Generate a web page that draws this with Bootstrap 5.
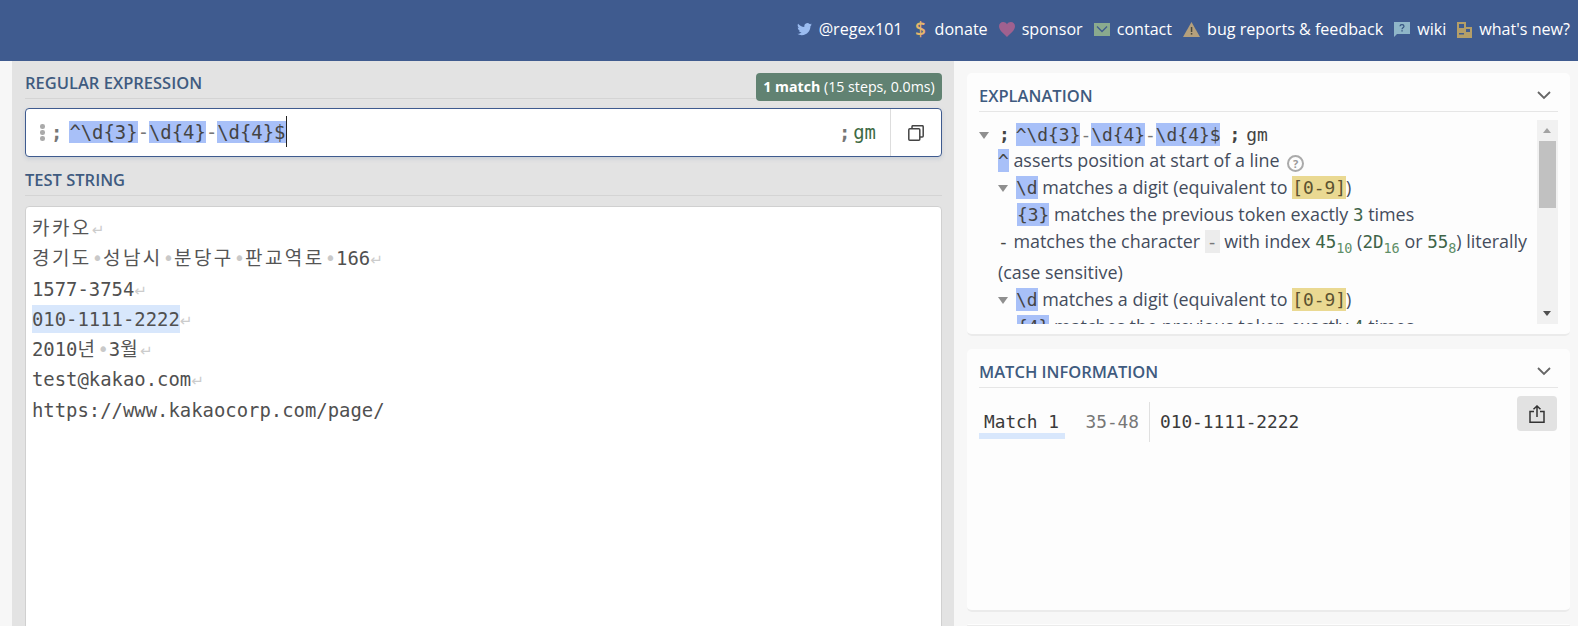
<!DOCTYPE html>
<html lang="en">
<head>
<meta charset="utf-8">
<title>regex101</title>
<link href="https://cdn.jsdelivr.net/npm/bootstrap@5.3.0/dist/css/bootstrap.min.css" rel="stylesheet">
<style>
:root{--code:"DejaVu Sans Mono","Liberation Mono","Noto Sans CJK KR",monospace;}
html,body{height:626px;overflow:hidden}
body{background:#f7f7f7;font-family:"Open Sans","Noto Sans",sans-serif;font-size:16px;color:#444c5c}
.rx-head{height:61px;background:#3f5b8f;padding:0 8px 2px 0;color:#fff;font-size:16.1px;line-height:21px}
.rx-head a{color:#fff;text-decoration:none;display:flex;align-items:center;gap:7px;margin-left:11px}
.rx-head svg{display:block}
.rx-dollar{color:#e5b56b;width:14px;text-align:center;font-size:19px;font-weight:600;line-height:21px}
.rx-body{height:565px;overflow:hidden}
.rx-left{width:942px;margin-left:12px;background:#e3e3e3;padding:0 12px 0 13px;flex:none}
.rx-right{width:603px;margin-left:13px;padding-top:12px;flex:none}
.rx-title{font-size:16.5px;font-weight:600;color:#3f5b80;line-height:20px}
.rx-titlebar{height:38px;padding-top:12px;border-bottom:1px solid #d4d4d4}
.rx-badge{position:absolute;right:0;top:12px;height:28px;width:186px;background:#618272;color:#fff;border-radius:4px;font-size:14.2px;line-height:28px;text-align:center;white-space:nowrap}
.rx-badge b{font-weight:700}
.rx-input{height:49px;margin-top:9px;border:1px solid #3f5b8f;border-radius:4px;background:#fff;box-shadow:0 2px 4px rgba(63,91,143,.15);padding-left:14px}
.rx-code{font-family:var(--code);font-size:18.9px;color:#444}
.rx-delim{font-family:var(--code);color:#777;font-weight:700}
.rx-dots{width:8px;margin-right:3px;gap:1.5px}
.rx-dots i{display:block;width:4.500px;height:4.500px;border-radius:50%;background:#aaa}
.rx-hl{background:#a8c0f8}
.rx-dash{color:#777}
.rx-caret{display:inline-block;width:1px;height:31px;background:#222;vertical-align:middle;margin-top:-3px}
.rx-flags{color:#3f6b44}
.rx-gap{margin-right:3px}
.rx-expr{margin-left:7px}
.rx-copy{width:51px;border-left:1px solid #ddd;margin-left:14px}
.rx-titlebar2{height:39px;padding-top:13px;border-bottom:1px solid #d4d4d4}
.rx-test{height:421px;margin-top:10px;background:#fff;border:1px solid #d0d0d0;border-radius:4px 4px 0 0;padding:6px 6px;font-family:var(--code);font-size:18.9px;color:#505050;white-space:pre}
.rx-line{height:30.3px;line-height:30.3px}
.rx-ko{font-family:"Noto Sans CJK KR",sans-serif;font-size:19px;letter-spacing:2.400px;color:#555;line-height:1}
.rx-sp{color:#c9c9c9;display:inline-block;width:11.4px;text-align:center;line-height:1}
.rx-nl{color:#ccc;font-size:15px;font-family:"DejaVu Sans",sans-serif;line-height:1}
.rx-match{background:#d8e7fc;padding:3px 0}
.rx-card{height:263px;background:#fdfdfd;border:0;border-bottom:2px solid #ebebeb;border-radius:5px;padding:0 12px;margin-bottom:13px;overflow:hidden}
.rx-sliver{height:3px;margin:-1px 0 0}
.rx-cardhead{height:39px;padding-top:13px;border-bottom:1px solid #e6e6e6}
.rx-chev{position:absolute;right:19px;top:18px}
.rx-scroll{position:absolute;right:12px;top:47px;width:21px;height:204px;background:#f1f1f1}
.rx-thumb{position:absolute;left:2px;right:2px;top:21px;height:67px;background:#c1c1c1}
.rx-arrowup,.rx-arrowdn{position:absolute;left:6px;width:0;height:0;border-left:4.5px solid transparent;border-right:4.5px solid transparent}
.rx-arrowup{top:8px;border-bottom:5px solid #a3a3a3}
.rx-arrowdn{bottom:8px;border-top:5px solid #505050}
.rx-expl{height:212px;padding-top:9px;overflow:hidden;width:552px;font-size:17.9px;line-height:27px}
.rx-row{white-space:nowrap;height:27px}
.rx-first{height:26px}
.rx-i1{padding-left:19px}
.rx-i2{padding-left:38px}
.rx-tri{display:inline-block;width:0;height:0;border-left:5.5px solid transparent;border-right:5.5px solid transparent;border-top:7px solid #8f8f8f;margin:0 8px 1px 0;vertical-align:middle}
.rx-tri0{margin-right:10px}
.rx-m{font-family:var(--code);font-size:17.9px;color:#444}
.rx-tok{background:#a8c0f8;padding:1px 0}
.rx-cls{background:#ead992;padding:1px 0;color:#5c5230}
.rx-lit{background:#ececec;padding:1px 2px;color:#777}
.rx-num{color:#3f6448;font-family:var(--code);font-size:17.5px}
.rx-sub{font-size:13.5px;color:#5f8f68;font-family:var(--code);vertical-align:-5px;line-height:0}
.rx-help{display:inline-block;width:17px;height:17px;border:2px solid #aaa;border-radius:50%;font-size:11px;line-height:13px;text-align:center;color:#999;font-weight:700;margin-left:3px;vertical-align:-1px}
.rx-wrap{height:31px;padding-top:4px}
.rx-ms{margin-left:6px}
.rx-ms2{margin-left:9px}
.rx-minfo{padding-top:14px;font-family:var(--code);font-size:17.8px;color:#3a3a3a}
.rx-mname{width:86px;height:37px;padding:9px 0 0 5px;border-bottom:6px solid #d8e7fc;line-height:22px}
.rx-mpos{width:85px;padding:9px 10px 0 0;text-align:right;color:#777;line-height:22px;height:40px;border-right:1px solid #e0e0e0}
.rx-mval{padding:9px 0 0 10px;line-height:22px}
.rx-share{position:absolute;right:13px;top:47px;width:40px;height:35px;background:#e2e2e2;border-radius:4px;display:flex;align-items:center;justify-content:center}
</style>
</head>
<body>
<header class="rx-head d-flex justify-content-end align-items-center">
  <a href="#"><svg width="15" height="13" viewBox="0 0 24 21" fill="#9bbcf0"><path d="M23.95 2.57a10 10 0 0 1-2.82.78 4.96 4.96 0 0 0 2.16-2.73c-.95.56-2 .96-3.13 1.19a4.92 4.92 0 0 0-8.38 4.48C7.69 6.1 4.07 4.13 1.64 1.16a4.82 4.82 0 0 0-.67 2.48c0 1.71.87 3.21 2.19 4.09a4.9 4.9 0 0 1-2.23-.61v.06a4.92 4.92 0 0 0 3.95 4.82 5 5 0 0 1-2.21.09 4.94 4.94 0 0 0 4.6 3.42 9.87 9.87 0 0 1-6.1 2.1c-.39 0-.78-.02-1.17-.07a14 14 0 0 0 7.56 2.21c9.05 0 14-7.5 14-13.98 0-.21 0-.42-.02-.63a9.94 9.94 0 0 0 2.41-2.57z"/></svg>@regex101</a>
  <a href="#"><span class="rx-dollar">$</span>donate</a>
  <a href="#"><svg width="16" height="15" viewBox="0 0 16 15" fill="#a0618f"><path d="M8 15C5 12 0 8.500 0 4.300 0 1.800 1.900 0 4.100 0 5.700 0 7.200.9 8 2.300 8.800.9 10.300 0 11.900 0 14.100 0 16 1.800 16 4.300 16 8.500 11 12 8 15z"/></svg>sponsor</a>
  <a href="#"><svg width="16" height="13" viewBox="0 0 16 13"><rect width="16" height="13" fill="#8aaa8e"/><path d="M3 3.500l5 5 5-5" fill="none" stroke="#3f5b8f" stroke-width="1.300"/></svg>contact</a>
  <a href="#"><svg width="17" height="15" viewBox="0 0 17 15"><path d="M8.500 0L17 15H0z" fill="#b5a07c"/><rect x="7.800" y="5" width="1.500" height="5" fill="#4a4a40"/><rect x="7.800" y="11" width="1.500" height="1.600" fill="#4a4a40"/></svg>bug reports &amp; feedback</a>
  <a href="#"><svg width="16" height="15" viewBox="0 0 16 15"><path d="M0 0h16v12H3l-3 3z" fill="#8fb6c8"/><path d="M6 4.200c0-2 4-2 4 0 0 1.500-2 1.500-2 3" fill="none" stroke="#34527f" stroke-width="1.200"/><rect x="7.400" y="8.200" width="1.300" height="1.300" fill="#34527f"/></svg>wiki</a>
  <a href="#"><svg width="15" height="16" viewBox="0 0 15 16"><path d="M0 0h9v5h6v11H0z" fill="#b49e68"/><rect x="2" y="2" width="5" height="4" fill="#3f5b8f"/><rect x="9" y="7" width="4" height="3" fill="#3f5b8f"/><rect x="2" y="11" width="5" height="1.500" fill="#3f5b8f"/></svg>what's new?</a>
</header>
<div class="rx-body d-flex">
  <section class="rx-left">
    <div class="position-relative">
      <div class="rx-titlebar"><div class="rx-title">REGULAR EXPRESSION</div></div>
      <div class="rx-badge"><b>1 match</b> (15 steps, 0.0ms)</div>
    </div>
    <div class="rx-input d-flex align-items-center">
      <div class="rx-dots d-flex flex-column"><i></i><i></i><i></i></div>
      <span class="rx-delim rx-code">;</span>
      <span class="rx-code rx-expr flex-grow-1"><span class="rx-hl">^\d{3}</span><span class="rx-dash">-</span><span class="rx-hl">\d{4}</span><span class="rx-dash">-</span><span class="rx-hl">\d{4}$</span><span class="rx-caret"></span></span>
      <span class="rx-delim rx-code rx-gap">;</span><span class="rx-code rx-flags">gm</span>
      <div class="rx-copy h-100 d-flex align-items-center justify-content-center">
        <svg width="16" height="16" viewBox="0 0 16 16" fill="none" stroke="#444" stroke-width="1.500"><rect x=".8" y="3.800" width="11" height="11.400" rx="1"/><path d="M4 3.500V1.700a1 1 0 0 1 1-1h9.200a1 1 0 0 1 1 1V11a1 1 0 0 1-1 1H12"/></svg>
      </div>
    </div>
    <div class="rx-titlebar2"><div class="rx-title">TEST STRING</div></div>
    <div class="rx-test"><div class="rx-line"><span class="rx-ko">카카오</span><span class="rx-nl">↵</span></div><div class="rx-line"><span class="rx-ko">경기도</span><span class="rx-sp">•</span><span class="rx-ko">성남시</span><span class="rx-sp">•</span><span class="rx-ko">분당구</span><span class="rx-sp">•</span><span class="rx-ko">판교역로</span><span class="rx-sp">•</span>166<span class="rx-nl">↵</span></div><div class="rx-line">1577-3754<span class="rx-nl">↵</span></div><div class="rx-line"><span class="rx-match">010-1111-2222</span><span class="rx-nl">↵</span></div><div class="rx-line">2010<span class="rx-ko">년</span><span class="rx-sp">•</span>3<span class="rx-ko">월</span><span class="rx-nl">↵</span></div><div class="rx-line">test@kakao.com<span class="rx-nl">↵</span></div><div class="rx-line">https://www.kakaocorp.com/page/</div></div>
  </section>
  <aside class="rx-right">
    <div class="card rx-card position-relative">
      <div class="rx-cardhead"><div class="rx-title">EXPLANATION</div></div>
      <svg class="rx-chev" width="14" height="9" viewBox="0 0 14 9" fill="none" stroke="#666" stroke-width="1.800"><path d="M1 1l6 6 6-6"/></svg>
      <div class="rx-expl">
        <div class="rx-row rx-first"><span class="rx-tri rx-tri0"></span><span class="rx-m rx-delim">;</span><span class="rx-m rx-ms"><span class="rx-tok">^\d{3}</span><span class="rx-dash">-</span><span class="rx-tok">\d{4}</span><span class="rx-dash">-</span><span class="rx-tok">\d{4}$</span></span><span class="rx-m rx-delim rx-ms2">;</span><span class="rx-m rx-flags rx-ms">gm</span></div>
        <div class="rx-row rx-i1"><span class="rx-m rx-tok">^</span> asserts position at start of a line <span class="rx-help">?</span></div>
        <div class="rx-row rx-i1"><span class="rx-tri"></span><span class="rx-m rx-tok">\d</span> matches a digit (equivalent to <span class="rx-m rx-cls">[0-9]</span>)</div>
        <div class="rx-row rx-i2"><span class="rx-m rx-tok">{3}</span> matches the previous token exactly <span class="rx-num">3</span> times</div>
        <div class="rx-row rx-i1"><span class="rx-m rx-dash">-</span> matches the character <span class="rx-m rx-lit">-</span> with index <span class="rx-num">45</span><span class="rx-sub">10</span> (<span class="rx-num">2D</span><span class="rx-sub">16</span> or <span class="rx-num">55</span><span class="rx-sub">8</span>) literally</div>
        <div class="rx-row rx-i1 rx-wrap">(case sensitive)</div>
        <div class="rx-row rx-i1"><span class="rx-tri"></span><span class="rx-m rx-tok">\d</span> matches a digit (equivalent to <span class="rx-m rx-cls">[0-9]</span>)</div>
        <div class="rx-row rx-i2"><span class="rx-m rx-tok">{4}</span> matches the previous token exactly <span class="rx-num">4</span> times</div>
      </div>
      <div class="rx-scroll"><span class="rx-arrowup"></span><div class="rx-thumb"></div><span class="rx-arrowdn"></span></div>
    </div>
    <div class="card rx-card position-relative">
      <div class="rx-cardhead"><div class="rx-title">MATCH INFORMATION</div></div>
      <svg class="rx-chev" width="14" height="9" viewBox="0 0 14 9" fill="none" stroke="#666" stroke-width="1.800"><path d="M1 1l6 6 6-6"/></svg>
      <div class="rx-minfo d-flex">
        <div class="rx-mname">Match 1</div>
        <div class="rx-mpos">35-48</div>
        <div class="rx-mval">010-1111-2222</div>
      </div>
      <div class="rx-share"><svg width="16" height="18" viewBox="0 0 16 18" fill="none" stroke="#333" stroke-width="1.500"><path d="M5 6.500H1v10.700h14V6.500h-4M8 12V1M4.500 4.300L8 1l3.500 3.300"/></svg></div>
    </div>
    <div class="card rx-card rx-sliver"></div>
  </aside>
</div>
<script src="https://cdn.jsdelivr.net/npm/bootstrap@5.3.0/dist/js/bootstrap.bundle.min.js"></script>
</body>
</html>
